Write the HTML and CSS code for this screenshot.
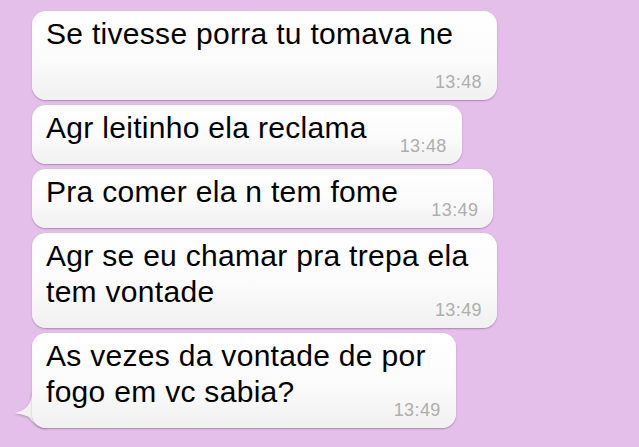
FILE: index.html
```html
<!DOCTYPE html>
<html lang="pt">
<head>
<meta charset="utf-8">
<title>Chat</title>
<link rel="stylesheet" href="styles.css">
</head>
<body>
<div class="chat">
  <div class="bubble time-below"><span class="text">Se tivesse porra tu tomava ne</span><span class="time">13:48</span></div>
  <div class="bubble"><span class="text">Agr leitinho ela reclama</span><span class="time">13:48</span></div>
  <div class="bubble"><span class="text">Pra comer ela n tem fome</span><span class="time">13:49</span></div>
  <div class="bubble multi"><span class="text">Agr se eu chamar pra trepa ela<br>tem vontade</span><span class="time">13:49</span></div>
  <div class="bubble multi tailed"><span class="text">As vezes da vontade de por<br>fogo em vc sabia?</span><span class="time">13:49</span><svg class="tail" width="34" height="40" viewBox="0 0 34 40" aria-hidden="true"><path d="M20 4 C20 15 14 23 2 25 C8 26 13 27 17 29 C20 33 24 38 32 40 L34 40 L34 4 Z" fill="#f1f1f1"/></svg></div>
</div>
</body>
</html>
```

FILE: styles.css
```css
html, body {
  margin: 0;
  height: 100%;
}

body {
  background: #e3bfe9;
  font-family: "Liberation Sans", Arial, sans-serif;
  overflow: hidden;
}

.chat {
  display: flex;
  flex-direction: column;
  align-items: flex-start;
  gap: 5px;
  padding: 11px 0 0 32px;
}

.bubble {
  position: relative;
  display: flow-root;
  box-sizing: border-box;
  max-width: 465px;
  padding: 5px 15px 9px 14px;
  border-radius: 14px;
  background: linear-gradient(180deg, #ffffff 0%, #fbfbfb 55%, #f0f0f0 100%);
  box-shadow: 0 1px 1.5px rgba(110, 60, 120, 0.45);
  font-size: 30px;
  line-height: 36px;
}

.text {
  font-size: 30px;
  line-height: 36px;
  letter-spacing: 0.3px;
  color: #000;
}

.time {
  float: right;
  margin: 27px 0 0 33px;
  font-size: 18px;
  line-height: 18px;
  letter-spacing: 0.4px;
  color: #aeaeae;
}

.time-below .time {
  margin-top: 21px;
}

.multi {
  padding-right: 30px;
}

.multi .text {
  white-space: nowrap;
}

.multi .time {
  margin-right: -15px;
}

.tail {
  position: absolute;
  left: -20px;
  bottom: 0;
  z-index: -1;
  filter: drop-shadow(0 1px 1px rgba(110, 60, 120, 0.4));
}
```
